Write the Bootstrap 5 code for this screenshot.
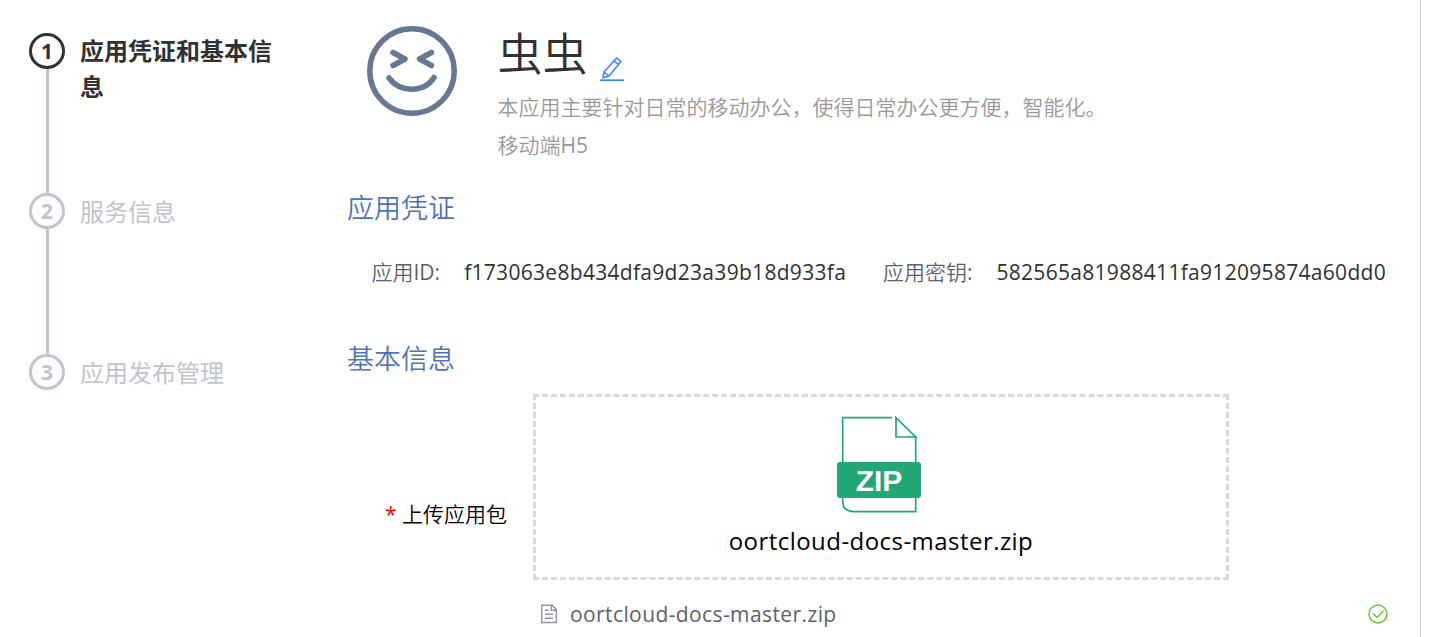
<!DOCTYPE html>
<html lang="zh-CN">
<head>
<meta charset="utf-8">
<meta name="viewport" content="width=device-width, initial-scale=1">
<title>应用凭证和基本信息</title>
<link href="https://cdn.jsdelivr.net/npm/bootstrap@5.3.0/dist/css/bootstrap.min.css" rel="stylesheet">
<style>
body{font-family:"Open Sans","Noto Sans CJK SC",sans-serif;font-size:21px;line-height:30px;color:#303133;background:#fff;height:637px}
.page{width:1421px;height:637px;border-right:1px solid #ccc}
.steps{width:347px;padding:33px 0 0 29px}
.step-item{height:160.4px;gap:15px}
.step-rail{width:36px}
.step-num{width:36px;height:36px;border:3px solid #c0c4cc;font-size:21px;font-weight:700;line-height:30px;color:#c0c4cc;flex:none}
.step-line{width:3px;background:#c0c4cc;margin-left:1px}
.step-title{width:200px;font-size:24px;line-height:37px;color:#c0c4cc;font-weight:400}
.step-item.active .step-num{border-color:#303133;color:#303133}
.step-item.active .step-title{color:#303133;font-weight:700;line-height:36px}
.thin{font-weight:350}
.latin{font-weight:400}
.app-head{padding:26px 0 0 20px;gap:40.500px;height:188px}
.app-name{font-size:45px;line-height:56px;height:62px;gap:12.500px;font-weight:350}
.app-text{color:#999;line-height:38px}
.app-kind{line-height:39px}
.section-title{font-size:27px;line-height:40px;color:#5073b8;margin:0;font-weight:350}
.cred{padding:29px 34px 0 24.500px;height:111px}
.cred-label{color:#5a6078;margin-right:24px}
.cred-value{letter-spacing:.3px}
.upload-label{width:186px;padding:53px 26px 0 0;color:#000}
.required-mark{color:red;font-weight:400}
.upload-row{padding-top:15px}
.drop-box{width:696px;height:186px;border:3px dashed #d9d9d9;padding-top:19px}
.zip-icon{margin-right:4px}
.zip-name{font-size:24px;line-height:32px;color:#000;margin-top:12px;letter-spacing:.45px}
.file-row{padding:19px 32px 0 193px;color:#606266}
.file-name{margin-left:12px;letter-spacing:.4px}
svg{display:block;flex:none}
.edit-icon{margin-top:31px}
</style>
</head>
<body class="overflow-hidden">
<div class="page d-flex">
  <aside class="steps flex-shrink-0">
    <div class="step-item d-flex active">
      <div class="step-rail d-flex flex-column align-items-center"><div class="step-num rounded-circle text-center">1</div><div class="step-line flex-grow-1"></div></div>
      <div class="step-title">应用凭证和基本信息</div>
    </div>
    <div class="step-item d-flex">
      <div class="step-rail d-flex flex-column align-items-center"><div class="step-num rounded-circle text-center">2</div><div class="step-line flex-grow-1"></div></div>
      <div class="step-title">服务信息</div>
    </div>
    <div class="step-item d-flex">
      <div class="step-rail"><div class="step-num rounded-circle text-center">3</div></div>
      <div class="step-title">应用发布管理</div>
    </div>
  </aside>
  <main class="flex-grow-1">
    <header class="app-head d-flex">
      <svg width="90" height="90" viewBox="0 0 90 90" fill="none" stroke="#677894" stroke-width="5.500" stroke-linecap="round" stroke-linejoin="round"><circle cx="45" cy="45" r="42.200"/><path d="M26 26.500l12 6.500-12 6.500M64.500 26.500l-12 6.500 12 6.500M22 52c11 15 35 15 45-.5"/></svg>
      <div>
        <div class="app-name d-flex"><span>虫虫</span>
          <svg class="edit-icon" width="24" height="25" viewBox="0 0 24 25" fill="none" stroke="#3a84ff" stroke-width="1.500" stroke-linejoin="round"><path d="M4 15L16.500.9l4.500 3.600L9 19 2.800 20.800zM14 3.800l4.500 3.700M4 15l5 4"/><path d="M0 23.200h24" stroke-width="1.700"/></svg>
        </div>
        <div class="app-text thin">本应用主要针对日常的移动办公，使得日常办公更方便，智能化。</div>
        <div class="app-text app-kind thin">移动端<span class="latin">H5</span></div>
      </div>
    </header>
    <h2 class="section-title">应用凭证</h2>
    <div class="cred d-flex text-nowrap">
      <span class="cred-label thin">应用<span class="latin">ID:</span></span><span class="cred-value">f173063e8b434dfa9d23a39b18d933fa</span>
      <span class="cred-label thin ms-auto">应用密钥<span class="latin">:</span></span><span class="cred-value">582565a81988411fa912095874a60dd0</span>
    </div>
    <h2 class="section-title">基本信息</h2>
    <div class="upload-row d-flex align-items-center">
      <div class="upload-label thin text-end"><span class="required-mark">*</span> 上传应用包</div>
      <div class="drop-box d-flex flex-column align-items-center">
        <svg class="zip-icon" width="84" height="97" viewBox="0 0 84 97"><path d="M5.700 46V1.700H55M78.700 21V95.700H16q-10.300-1-10.300-10V80M59 1.700V21h19.700z" fill="none" stroke="#23a776" stroke-width="1.700"/><rect y="46" width="84" height="36" rx="3" fill="#23a776"/><text x="42" y="75" text-anchor="middle" font-family="Liberation Sans" font-weight="700" font-size="30" fill="#fff">ZIP</text></svg>
        <div class="zip-name">oortcloud-docs-master.zip</div>
      </div>
    </div>
    <div class="file-row d-flex align-items-center">
      <svg width="18" height="20" viewBox="0 0 18 20" fill="none" stroke="#909399" stroke-width="1.400"><path d="M1.700 1.200H12l4.300 4.300v13H1.700zM11.300 1.200v5h5M5 6.200h3.500M5 10.200h8M5 14.200h8"/></svg>
      <span class="file-name">oortcloud-docs-master.zip</span>
      <svg class="ms-auto" width="20" height="20" viewBox="0 0 20 20" fill="none" stroke="#67c23a" stroke-width="1.400"><circle cx="10" cy="10" r="9"/><path d="M5 9.500l4 3.700 6.500-6.200"/></svg>
    </div>
  </main>
</div>
<script src="https://cdn.jsdelivr.net/npm/bootstrap@5.3.0/dist/js/bootstrap.bundle.min.js"></script>
</body>
</html>
